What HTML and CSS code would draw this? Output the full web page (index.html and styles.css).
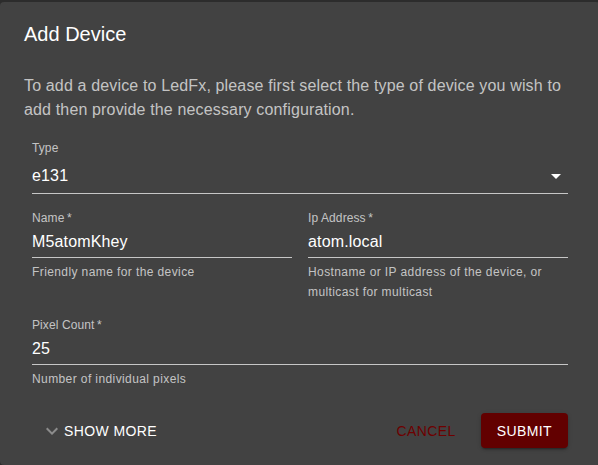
FILE: index.html
```html
<!DOCTYPE html>
<html lang="en">
<head>
<meta charset="utf-8">
<title>Add Device</title>
<link rel="stylesheet" href="styles.css">
</head>
<body>
<div class="dialog">
  <h2 class="dialog-title">Add Device</h2>
  <div class="dialog-content">
    <p class="dialog-text">To add a device to LedFx, please first select the type of device you wish to add then provide the necessary configuration.</p>
    <form class="form">
      <div class="field field-select">
        <label class="field-label">Type</label>
        <div class="field-input">
          <span class="field-value">e131</span>
          <svg class="select-icon" viewBox="0 0 24 24" width="24" height="24"><path d="M7 10l5 5 5-5z" fill="#fff"/></svg>
        </div>
      </div>
      <div class="row">
        <div class="field">
          <label class="field-label">Name<span class="req">&#8201;*</span></label>
          <div class="field-input"><span class="field-value">M5atomKhey</span></div>
          <p class="field-help">Friendly name for the device</p>
        </div>
        <div class="field">
          <label class="field-label">Ip Address<span class="req">&#8201;*</span></label>
          <div class="field-input"><span class="field-value">atom.local</span></div>
          <p class="field-help">Hostname or IP address of the device, or multicast for multicast</p>
        </div>
      </div>
      <div class="field">
        <label class="field-label">Pixel Count<span class="req">&#8201;*</span></label>
        <div class="field-input"><span class="field-value">25</span></div>
        <p class="field-help">Number of individual pixels</p>
      </div>
    </form>
  </div>
  <div class="dialog-actions">
    <button class="btn btn-more" type="button">
      <svg class="more-icon" viewBox="0 0 24 24" width="24" height="24"><path d="M16.59 8.59L12 13.17 7.41 8.59 6 10l6 6 6-6z" fill="#8c8c8c"/></svg>
      <span>SHOW MORE</span>
    </button>
    <div class="actions-right">
      <button class="btn btn-cancel" type="button">CANCEL</button>
      <button class="btn btn-submit" type="button">SUBMIT</button>
    </div>
  </div>
</div>
</body>
</html>
```
FILE: styles.css
```css
html, body {
  margin: 0;
  padding: 0;
  overflow: hidden;
  background: #2c2c2c;
  font-family: "Liberation Sans", Arial, sans-serif;
}

body {
  width: 598px;
  height: 465px;
}

.dialog {
  margin-top: 2px;
  width: 600px;
  height: 463px;
  background: #424242;
  border-radius: 4px;
  box-sizing: border-box;
  color: #fff;
}

.dialog-title {
  margin: 0;
  padding: 16px 24px;
  font-size: 20px;
  line-height: 32px;
  font-weight: 400;
  color: #fff;
}

.dialog-content {
  padding: 0 24px;
}

.dialog-text {
  margin: 8px 0 18px;
  font-size: 16px;
  line-height: 24px;
  letter-spacing: 0.15px;
  color: rgba(255, 255, 255, 0.7);
}

.form {
  margin: 0 8px;
  display: flex;
  flex-direction: column;
  gap: 15px;
}

.row {
  display: grid;
  grid-template-columns: 1fr 1fr;
  column-gap: 16px;
}

.field-label {
  display: block;
  font-size: 12px;
  line-height: 16px;
  color: rgba(255, 255, 255, 0.7);
  letter-spacing: 0.1px;
}

.field-input {
  position: relative;
  margin-top: 6px;
  padding-bottom: 6px;
  border-bottom: 1px solid rgba(255, 255, 255, 0.7);
  display: flex;
  align-items: center;
}

.field-value {
  font-size: 16px;
  line-height: 19px;
  color: #fff;
  letter-spacing: 0.15px;
}

.field-select {
  margin-bottom: 1px;
}

.field-select .field-input {
  margin-top: 10px;
  padding-bottom: 8px;
}

.select-icon {
  position: absolute;
  right: 0;
  top: -2px;
}

.field-help {
  margin: 4px 0 0;
  font-size: 12px;
  line-height: 20px;
  letter-spacing: 0.4px;
  color: rgba(255, 255, 255, 0.7);
}

.dialog-actions {
  margin-top: 24px;
  padding: 0 32px 0 40px;
  display: flex;
  justify-content: space-between;
  align-items: center;
}

.btn {
  font-family: "Liberation Sans", Arial, sans-serif;
  font-size: 14px;
  letter-spacing: 0.4px;
  line-height: 24px;
  border: 0;
  background: none;
  padding: 0;
  cursor: pointer;
}

.btn-more {
  display: flex;
  align-items: center;
  color: #fff;
  height: 35px;
}

.more-icon {
  display: block;
}

.actions-right {
  display: flex;
  align-items: center;
}

.btn-cancel {
  color: #6e0000;
  margin-right: 25px;
}

.btn-submit {
  height: 35px;
  padding: 0 16px;
  background: #620000;
  color: #fff;
  border-radius: 4px;
  box-shadow: 0 3px 1px -2px rgba(0, 0, 0, 0.2), 0 2px 2px 0 rgba(0, 0, 0, 0.14), 0 1px 5px 0 rgba(0, 0, 0, 0.12);
}
```
